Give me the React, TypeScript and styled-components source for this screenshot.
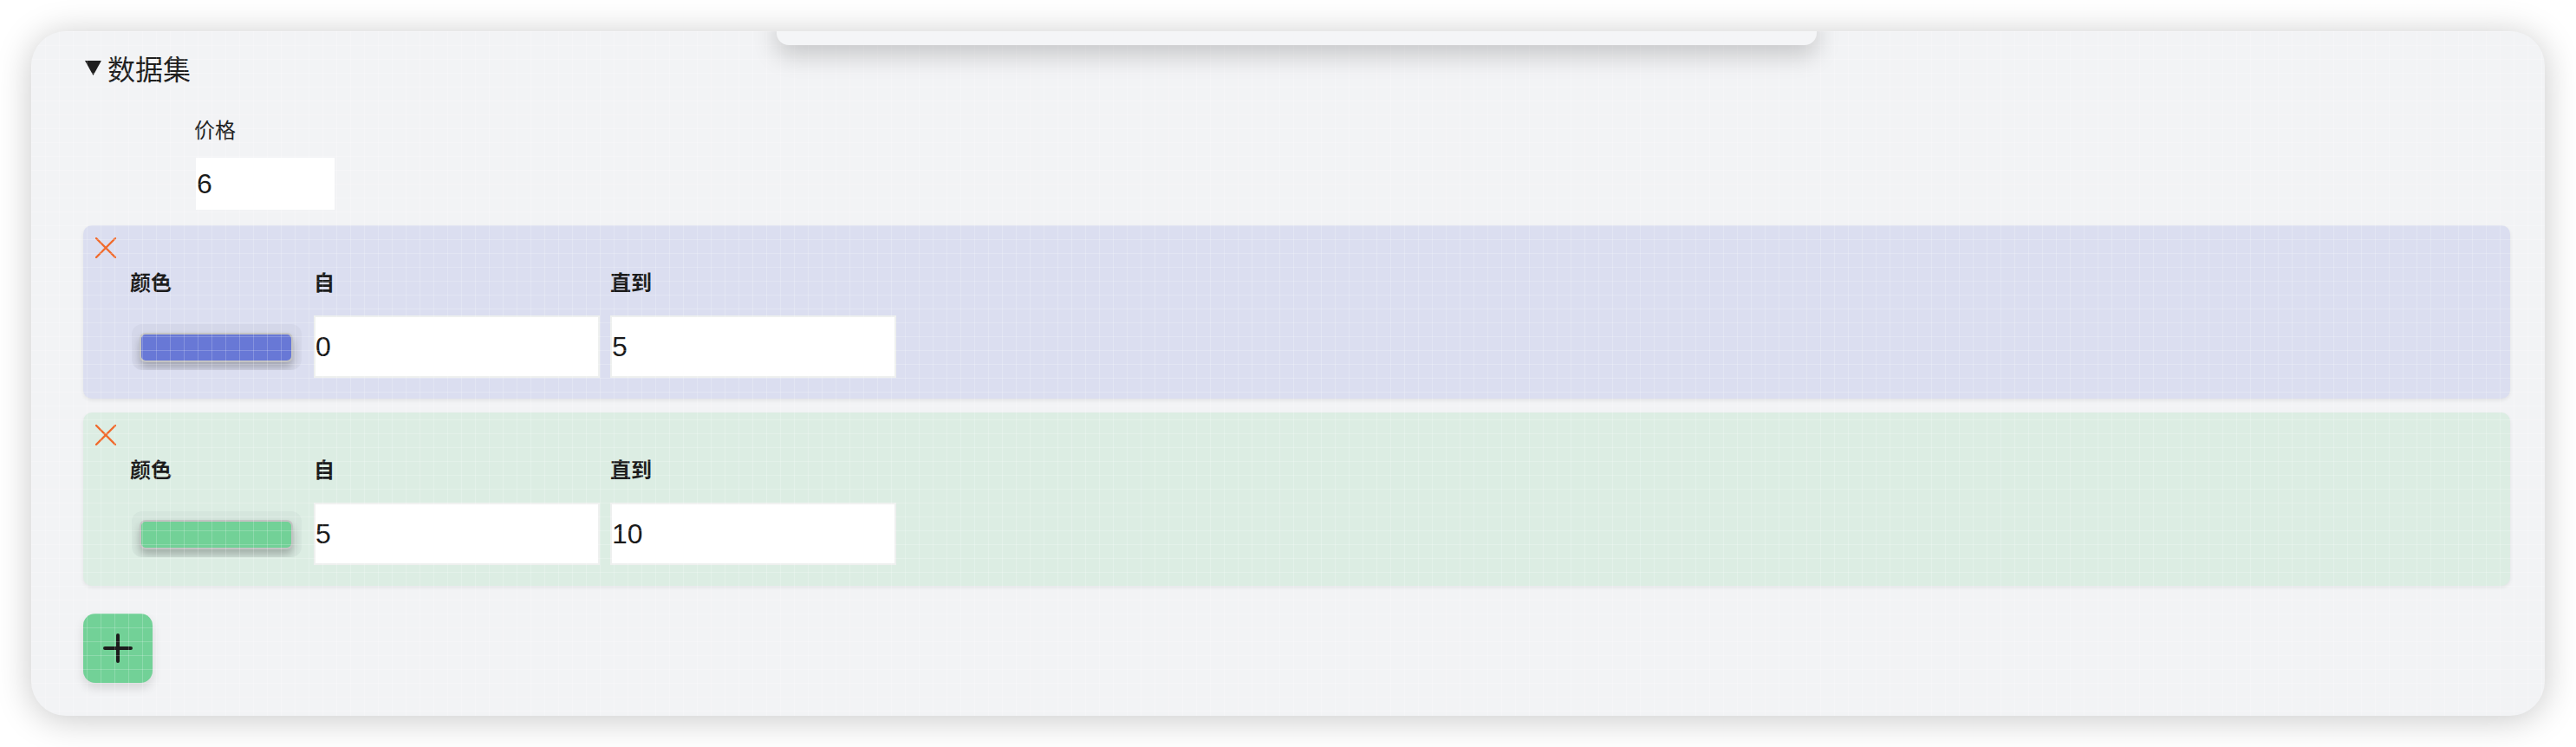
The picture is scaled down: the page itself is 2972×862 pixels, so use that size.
import React from "react";
import styled, { createGlobalStyle } from "styled-components";

const GlobalStyle = createGlobalStyle`
  html, body { margin: 0; padding: 0; background: #ffffff; }
  body { font-family: "Noto Sans CJK SC", "Noto Sans", sans-serif; color: #1b1b1b; }
  * { box-sizing: border-box; }
`;

const Page = styled.div`
  padding: 36px;
`;

const Card = styled.section`
  position: relative;
  overflow: hidden;
  background: #f2f3f5;
  border-radius: 40px;
  box-shadow: 0 4px 40px rgba(0, 0, 0, 0.22);
  padding: 20px 40px 38px 60px;

  &::after {
    content: "";
    position: absolute;
    inset: 0;
    pointer-events: none;
    background-image:
      linear-gradient(to right, rgba(255, 255, 255, 0.2) 1px, transparent 1px),
      linear-gradient(to bottom, rgba(255, 255, 255, 0.2) 1px, transparent 1px);
    background-size: 16px 16px;
  }
`;

const TopSheet = styled.div`
  position: absolute;
  top: -24px;
  left: 860px;
  width: 1200px;
  height: 40px;
  background: #f4f5f7;
  border-radius: 0 0 14px 14px;
  box-shadow: 0 12px 28px rgba(0, 0, 0, 0.18);
  z-index: 2;
`;

const Disclosure = styled.details`
  display: block;
`;

const Summary = styled.summary`
  display: flex;
  align-items: center;
  gap: 7px;
  height: 44px;
  list-style: none;
  cursor: pointer;
  font-size: 32px;
  line-height: 44px;
  color: #1f1f1f;
  margin-left: 2px;
  &::-webkit-details-marker { display: none; }
`;

const PriceField = styled.div`
  display: flex;
  flex-direction: column;
  align-items: flex-start;
  gap: 18px;
  margin: 34px 0 0 128px;
`;

const FieldLabel = styled.label`
  font-size: 24px;
  line-height: 30px;
  color: #1f1f1f;
`;

const PriceInput = styled.input`
  width: 160px;
  height: 60px;
  margin-left: 2px;
  border: none;
  outline: none;
  padding: 0 0 0 1px;
  background: #ffffff;
  font-family: "Liberation Sans", Arial, sans-serif;
  font-size: 32px;
  color: #1a1a1a;
`;

const RangeList = styled.div`
  display: flex;
  flex-direction: column;
  gap: 16px;
  margin-top: 18px;
`;

const RangeRow = styled.div<{ $tone: string }>`
  background: ${(p) => p.$tone};
  border-radius: 10px;
  box-shadow: 0 2px 4px rgba(0, 0, 0, 0.07);
  padding: 14px 14px 24px 14px;
`;

const RemoveButton = styled.button`
  display: block;
  width: 24px;
  height: 24px;
  padding: 0;
  border: none;
  background: none;
  cursor: pointer;
`;

const FieldGrid = styled.div`
  display: grid;
  grid-template-columns: 200px 330px 330px;
  column-gap: 12px;
  row-gap: 24px;
  margin: 12px 0 0 40px;
  align-items: center;
`;

const ColLabel = styled.span`
  font-size: 24px;
  line-height: 30px;
  font-weight: 700;
  color: #1c1c1c;
`;

const SwatchWell = styled.div`
  width: 196px;
  height: 53px;
  margin-left: 2px;
  border-radius: 12px;
  background: rgba(110, 115, 140, 0.06);
  overflow: hidden;
  padding: 10px 10px 9px 9px;
`;

const Swatch = styled.div<{ $color: string }>`
  width: 100%;
  height: 34px;
  border-radius: 7px;
  border: 2px solid #c3c3c3;
  background: ${(p) => p.$color};
  box-shadow: 0 6px 10px rgba(0, 0, 0, 0.24);
`;

const NumberInput = styled.input`
  width: 330px;
  height: 72px;
  border: 2px solid #eef0ef;
  outline: none;
  padding: 0;
  background: #ffffff;
  font-family: "Liberation Sans", Arial, sans-serif;
  font-size: 32px;
  color: #1a1a1a;
`;

const AddButton = styled.button`
  display: flex;
  align-items: center;
  justify-content: center;
  width: 80px;
  height: 80px;
  margin-top: 32px;
  border: none;
  border-radius: 14px;
  background: #72d197;
  box-shadow: 0 6px 12px rgba(0, 0, 0, 0.12);
  cursor: pointer;
`;

const Caret = () => (
  <svg width="19" height="17" viewBox="0 0 19 17">
    <polygon points="0,0 19,0 9.5,17" fill="#1f1f1f" />
  </svg>
);

const CrossIcon = () => (
  <svg width="24" height="24" viewBox="0 0 24 24">
    <path d="M1 1 L23 23 M23 1 L1 23" stroke="#f06a2c" strokeWidth="2.4" strokeLinecap="round" />
  </svg>
);

const PlusIcon = () => (
  <svg width="34" height="34" viewBox="0 0 34 34">
    <path d="M17 2 V32 M2 17 H32" stroke="#1c1c1c" strokeWidth="4" strokeLinecap="round" />
  </svg>
);

type Range = { tone: string; color: string; from: string; to: string };

const ranges: Range[] = [
  { tone: "#dbdef0", color: "#6878d6", from: "0", to: "5" },
  { tone: "#dcede3", color: "#72d197", from: "5", to: "10" },
];

export default function App() {
  return (
    <Page>
      <GlobalStyle />
      <Card>
        <TopSheet />
        <Disclosure open>
          <Summary>
            <Caret />
            <span>数据集</span>
          </Summary>
          <PriceField>
            <FieldLabel>价格</FieldLabel>
            <PriceInput defaultValue="6" />
          </PriceField>
          <RangeList>
            {ranges.map((r, i) => (
              <RangeRow key={i} $tone={r.tone}>
                <RemoveButton aria-label="remove">
                  <CrossIcon />
                </RemoveButton>
                <FieldGrid>
                  <ColLabel>颜色</ColLabel>
                  <ColLabel>自</ColLabel>
                  <ColLabel>直到</ColLabel>
                  <SwatchWell>
                    <Swatch $color={r.color} />
                  </SwatchWell>
                  <NumberInput defaultValue={r.from} />
                  <NumberInput defaultValue={r.to} />
                </FieldGrid>
              </RangeRow>
            ))}
          </RangeList>
          <AddButton aria-label="add">
            <PlusIcon />
          </AddButton>
        </Disclosure>
      </Card>
    </Page>
  );
}
